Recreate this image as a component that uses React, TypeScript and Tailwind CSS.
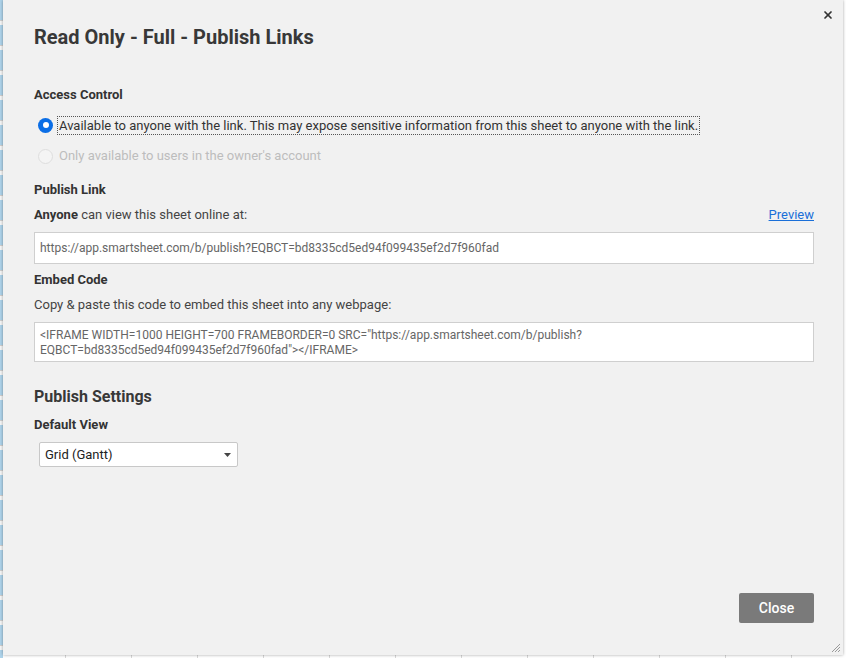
import React from 'react';
import { X } from 'lucide-react';

const font = { fontFamily: 'Roboto, "Liberation Sans", sans-serif' };

const ResizeGrip: React.FC = () => (
    <svg width="12" height="12" viewBox="0 0 12 12" className="text-[#9a9a9a]">
        <path d="M11 3 L3 11 M11 6 L6 11 M11 9 L9 11" stroke="currentColor" strokeWidth="1" fill="none" />
    </svg>
);

const PublishDialog: React.FC = () => {
    return (
        <div className="ml-[3px] w-[840px] h-[655px] bg-[#f1f1f1] shadow-[0_0_3px_rgba(0,0,0,0.35)] relative flex flex-col pl-[31px] pr-[29px] pb-[32px] text-[#444]">
            <button className="absolute top-[9px] right-[9px] text-[#333]">
                <X size={12} strokeWidth={3.5} />
            </button>

            <h2 className="mt-[25px] text-[20px] leading-[24px] font-bold text-[#383838]">Read Only - Full - Publish Links</h2>

            <h3 className="mt-[38px] text-[13px] leading-[16px] font-bold text-[#333]">Access Control</h3>
            <label className="mt-[12px] flex items-center h-[20px] text-[13px]">
                <span className="ml-[4px] w-[15px] h-[15px] rounded-full bg-[#0b6ee6] flex items-center justify-center flex-shrink-0">
                    <span className="w-[6px] h-[6px] rounded-full bg-white" />
                </span>
                <span className="ml-[4px] px-[1px] border border-dotted border-[#555] leading-[17px] text-[#333]">
                    Available to anyone with the link. This may expose sensitive information from this sheet to anyone with the link.
                </span>
            </label>
            <label className="mt-[11px] flex items-center h-[20px] text-[13px] text-[#bdbdbd]">
                <span className="ml-[4px] w-[15px] h-[15px] rounded-full border border-[#dedede] bg-[#f4f4f4] flex-shrink-0" />
                <span className="ml-[5px] px-[1px]">Only available to users in the owner's account</span>
            </label>

            <h3 className="mt-[16px] text-[13px] leading-[16px] font-bold text-[#333]">Publish Link</h3>
            <div className="mt-[9px] flex justify-between text-[13px] leading-[16px]">
                <span><b className="text-[#333]">Anyone</b> can view this sheet online at:</span>
                <a href="#" className="text-[#1a6fd8] underline">Preview</a>
            </div>
            <div className="mt-[9px] h-[32px] bg-white border border-[#cfcfcf] flex items-center pl-[5px] text-[12px] text-[#666]">
                https://app.smartsheet.com/b/publish?EQBCT=bd8335cd5ed94f099435ef2d7f960fad
            </div>

            <h3 className="mt-[8px] text-[13px] leading-[16px] font-bold text-[#333]">Embed Code</h3>
            <p className="mt-[9px] text-[13px] leading-[16px]">Copy &amp; paste this code to embed this sheet into any webpage:</p>
            <div className="mt-[9px] h-[40px] bg-white border border-[#cfcfcf] pl-[5px] pt-[5px] text-[12px] leading-[15px] text-[#666]">
                &lt;IFRAME WIDTH=1000 HEIGHT=700 FRAMEBORDER=0 SRC="https://app.smartsheet.com/b/publish?
                <br />
                EQBCT=bd8335cd5ed94f099435ef2d7f960fad"&gt;&lt;/IFRAME&gt;
            </div>

            <h3 className="mt-[25px] text-[16px] leading-[20px] font-bold text-[#383838]">Publish Settings</h3>
            <h4 className="mt-[10px] text-[13px] leading-[16px] font-bold text-[#333]">Default View</h4>
            <div className="mt-[9px] ml-[5px] w-[199px] h-[25px] bg-white border border-[#c8c8c8] rounded-[2px] flex items-center justify-between pl-[5px] pr-[6px] text-[13px] text-[#222]">
                <span>Grid (Gantt)</span>
                <svg width="7" height="4" viewBox="0 0 7 4"><path d="M0 0 H7 L3.5 4 Z" fill="#444" /></svg>
            </div>

            <div className="flex-1" />
            <div className="flex justify-end">
                <button className="w-[75px] h-[30px] rounded-[2px] bg-[#7a7a7a] text-white text-[14px] font-medium">Close</button>
            </div>

            <div className="absolute right-[2px] bottom-[2px]">
                <ResizeGrip />
            </div>
        </div>
    );
};

const App: React.FC = () => {
    return (
        <div
            className="w-[846px] h-[658px] overflow-hidden bg-white bg-[linear-gradient(to_bottom,#aed3ea_0,#aed3ea_20px,#cfcfcf_20px,#cfcfcf_21px,#f6f6f6_21px,#f6f6f6_25px)] bg-[length:3px_25px] bg-repeat-y"
            style={font}
        >
            <div className="w-full h-full bg-[repeating-linear-gradient(to_right,transparent_0,transparent_65px,#d8d8d8_65px,#d8d8d8_66px)]">
                <PublishDialog />
            </div>
        </div>
    );
};

export default App;
